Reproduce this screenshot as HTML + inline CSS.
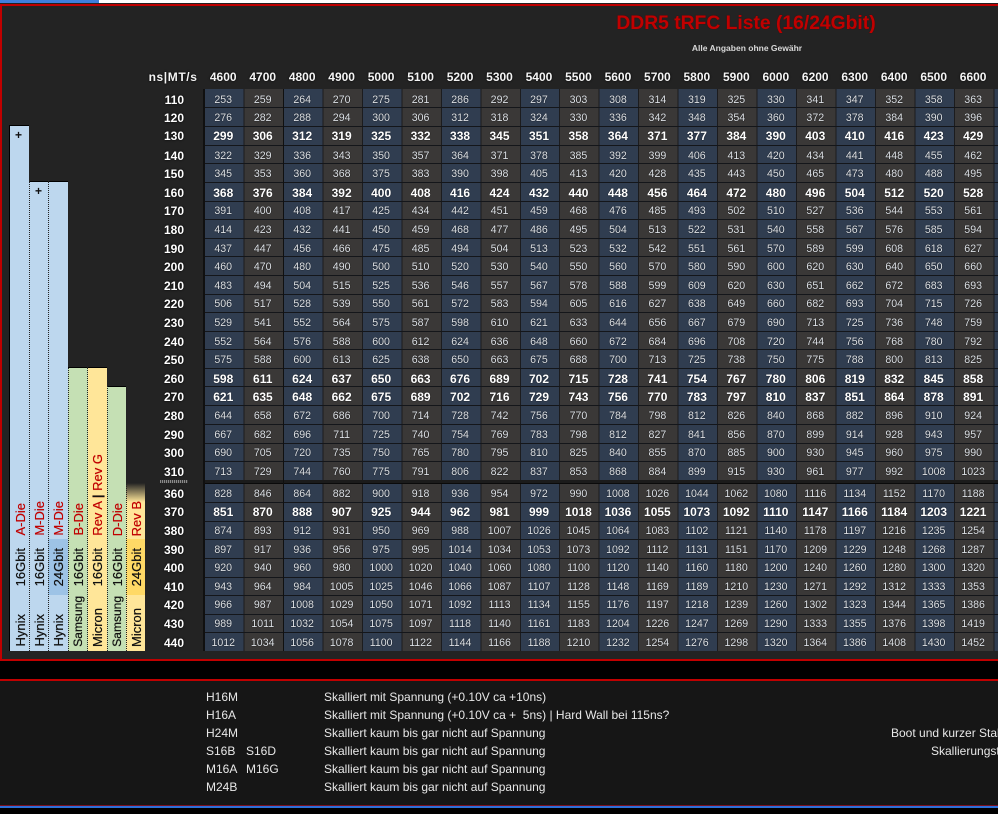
<!DOCTYPE html>
<html lang="de"><head><meta charset="utf-8"><title>DDR5 tRFC Liste</title>
<style>
html,body{margin:0;padding:0;background:#000}
#p{position:relative;width:998px;height:814px;overflow:hidden;background:#000;font-family:"Liberation Sans",sans-serif}
#p div{position:absolute}
.hd{top:70px;left:144px;height:15px;display:flex;color:#f4f4f4;font-weight:bold;font-size:12px;line-height:15px;text-shadow:0 0 2px #000}
.hd span{display:block;width:39.47px;text-align:center;flex:none}
.hd .f{width:59.5px;box-sizing:border-box;padding-right:6px;text-align:right;white-space:nowrap;letter-spacing:.6px}
.r{left:144px;width:854px;height:18.6px;margin-top:1px;display:flex;font-size:10.6px;line-height:18.6px;color:#dde1e6;text-shadow:0 0 1px #000}
.r b{display:block;width:59.5px;padding-right:19.5px;box-sizing:border-box;text-align:right;color:#fff;font-size:12px;text-shadow:0 0 2px #000;flex:none}
.r i{display:block;font-style:normal;width:39.47px;text-align:center;flex:none}
.s{color:#fff;font-weight:bold;font-size:12px}
.l{left:204px;width:794px;height:1px;background:#14161a}
.tx{writing-mode:vertical-rl;transform:rotate(180deg);white-space:nowrap;font-size:13px;line-height:19px;width:19px;text-align:left;color:#111;text-shadow:0 0 .5px #111}
.red{color:#c00000;text-shadow:0 0 .5px #c00000}
.note{font-size:12px;line-height:18px;color:#e8e8e8;white-space:nowrap;height:18px}
</style></head><body>
<div id="p">
<div style="left:0;top:0;width:998px;height:3px;background:#fff"></div>
<div style="left:0;top:0;width:99px;height:3px;background:#3f7fdc"></div>
<div style="left:0;top:3px;width:998px;height:1px;background:#222"></div>
<div style="left:0;top:4px;width:998px;height:657px;background:#c00000"></div>
<div style="left:2px;top:6px;width:996px;height:653px;background:#232323"></div>
<div style="left:0;top:679px;width:998px;height:2px;background:#c00000"></div>
<div style="left:0;top:681px;width:998px;height:124px;background:#161616"></div>
<div style="left:0;top:805px;width:998px;height:1px;background:#7a0f20"></div>
<div style="left:0;top:806px;width:998px;height:1.5px;background:#2f6fd8"></div>

<div style="left:556px;top:11px;width:380px;text-align:center;color:#c00000;font-weight:bold;font-size:19.3px;line-height:26px;text-shadow:0 0 1px #500;white-space:nowrap">DDR5 tRFC Liste (16/24Gbit)</div>
<div style="left:647px;top:43px;width:200px;text-align:center;color:#d8d8d8;font-weight:bold;font-size:8.5px;line-height:11px;white-space:nowrap">Alle Angaben ohne Gewähr</div>

<div class="hd"><span class="f">ns|MT/s</span><span>4600</span><span>4700</span><span>4800</span><span>4900</span><span>5000</span><span>5100</span><span>5200</span><span>5300</span><span>5400</span><span>5500</span><span>5600</span><span>5700</span><span>5800</span><span>5900</span><span>6000</span><span>6200</span><span>6300</span><span>6400</span><span>6500</span><span>6600</span></div>

<!-- table background -->
<div style="left:204px;top:89px;width:794px;height:391px;background:repeating-linear-gradient(90deg,#1c1c1e 0,#1c1c1e 1px,transparent 1px,transparent 39.47px),repeating-linear-gradient(90deg,#303d50 0,#303d50 39.47px,#3a3837 39.47px,#3a3837 78.94px)"></div>
<div style="left:204px;top:484px;width:794px;height:167px;background:repeating-linear-gradient(90deg,#1c1c1e 0,#1c1c1e 1px,transparent 1px,transparent 39.47px),repeating-linear-gradient(90deg,#303d50 0,#303d50 39.47px,#3a3837 39.47px,#3a3837 78.94px)"></div>
<div class="l" style="top:107px"></div><div class="l" style="top:126px"></div><div class="l" style="top:145px"></div><div class="l" style="top:163px"></div><div class="l" style="top:182px"></div><div class="l" style="top:201px"></div><div class="l" style="top:219px"></div><div class="l" style="top:238px"></div><div class="l" style="top:256px"></div><div class="l" style="top:275px"></div><div class="l" style="top:294px"></div><div class="l" style="top:312px"></div><div class="l" style="top:331px"></div><div class="l" style="top:349px"></div><div class="l" style="top:368px"></div><div class="l" style="top:386px"></div><div class="l" style="top:405px"></div><div class="l" style="top:424px"></div><div class="l" style="top:443px"></div><div class="l" style="top:461px"></div>
<div class="l" style="top:480px;height:4px;background:#1b1b1b"></div>
<div class="l" style="top:483px;background:#0a0a0a"></div>
<div class="l" style="top:502px"></div><div class="l" style="top:521px"></div><div class="l" style="top:539px"></div><div class="l" style="top:558px"></div><div class="l" style="top:577px"></div><div class="l" style="top:595px"></div><div class="l" style="top:614px"></div><div class="l" style="top:632px"></div>
<div style="left:203px;top:89px;width:2px;height:562px;background:#101010"></div>
<div style="left:283px;top:89px;width:1px;height:562px;background:#101010"></div>

<div class="r" style="top:89.7px"><b>110</b><i>253</i><i>259</i><i>264</i><i>270</i><i>275</i><i>281</i><i>286</i><i>292</i><i>297</i><i>303</i><i>308</i><i>314</i><i>319</i><i>325</i><i>330</i><i>341</i><i>347</i><i>352</i><i>358</i><i>363</i></div>
<div class="r" style="top:108.3px"><b>120</b><i>276</i><i>282</i><i>288</i><i>294</i><i>300</i><i>306</i><i>312</i><i>318</i><i>324</i><i>330</i><i>336</i><i>342</i><i>348</i><i>354</i><i>360</i><i>372</i><i>378</i><i>384</i><i>390</i><i>396</i></div>
<div class="r s" style="top:126.4px"><b>130</b><i>299</i><i>306</i><i>312</i><i>319</i><i>325</i><i>332</i><i>338</i><i>345</i><i>351</i><i>358</i><i>364</i><i>371</i><i>377</i><i>384</i><i>390</i><i>403</i><i>410</i><i>416</i><i>423</i><i>429</i></div>
<div class="r" style="top:145.5px"><b>140</b><i>322</i><i>329</i><i>336</i><i>343</i><i>350</i><i>357</i><i>364</i><i>371</i><i>378</i><i>385</i><i>392</i><i>399</i><i>406</i><i>413</i><i>420</i><i>434</i><i>441</i><i>448</i><i>455</i><i>462</i></div>
<div class="r" style="top:164.1px"><b>150</b><i>345</i><i>353</i><i>360</i><i>368</i><i>375</i><i>383</i><i>390</i><i>398</i><i>405</i><i>413</i><i>420</i><i>428</i><i>435</i><i>443</i><i>450</i><i>465</i><i>473</i><i>480</i><i>488</i><i>495</i></div>
<div class="r s" style="top:182.7px"><b>160</b><i>368</i><i>376</i><i>384</i><i>392</i><i>400</i><i>408</i><i>416</i><i>424</i><i>432</i><i>440</i><i>448</i><i>456</i><i>464</i><i>472</i><i>480</i><i>496</i><i>504</i><i>512</i><i>520</i><i>528</i></div>
<div class="r" style="top:201.3px"><b>170</b><i>391</i><i>400</i><i>408</i><i>417</i><i>425</i><i>434</i><i>442</i><i>451</i><i>459</i><i>468</i><i>476</i><i>485</i><i>493</i><i>502</i><i>510</i><i>527</i><i>536</i><i>544</i><i>553</i><i>561</i></div>
<div class="r" style="top:219.9px"><b>180</b><i>414</i><i>423</i><i>432</i><i>441</i><i>450</i><i>459</i><i>468</i><i>477</i><i>486</i><i>495</i><i>504</i><i>513</i><i>522</i><i>531</i><i>540</i><i>558</i><i>567</i><i>576</i><i>585</i><i>594</i></div>
<div class="r" style="top:238.5px"><b>190</b><i>437</i><i>447</i><i>456</i><i>466</i><i>475</i><i>485</i><i>494</i><i>504</i><i>513</i><i>523</i><i>532</i><i>542</i><i>551</i><i>561</i><i>570</i><i>589</i><i>599</i><i>608</i><i>618</i><i>627</i></div>
<div class="r" style="top:257.1px"><b>200</b><i>460</i><i>470</i><i>480</i><i>490</i><i>500</i><i>510</i><i>520</i><i>530</i><i>540</i><i>550</i><i>560</i><i>570</i><i>580</i><i>590</i><i>600</i><i>620</i><i>630</i><i>640</i><i>650</i><i>660</i></div>
<div class="r" style="top:275.7px"><b>210</b><i>483</i><i>494</i><i>504</i><i>515</i><i>525</i><i>536</i><i>546</i><i>557</i><i>567</i><i>578</i><i>588</i><i>599</i><i>609</i><i>620</i><i>630</i><i>651</i><i>662</i><i>672</i><i>683</i><i>693</i></div>
<div class="r" style="top:294.3px"><b>220</b><i>506</i><i>517</i><i>528</i><i>539</i><i>550</i><i>561</i><i>572</i><i>583</i><i>594</i><i>605</i><i>616</i><i>627</i><i>638</i><i>649</i><i>660</i><i>682</i><i>693</i><i>704</i><i>715</i><i>726</i></div>
<div class="r" style="top:312.9px"><b>230</b><i>529</i><i>541</i><i>552</i><i>564</i><i>575</i><i>587</i><i>598</i><i>610</i><i>621</i><i>633</i><i>644</i><i>656</i><i>667</i><i>679</i><i>690</i><i>713</i><i>725</i><i>736</i><i>748</i><i>759</i></div>
<div class="r" style="top:331.5px"><b>240</b><i>552</i><i>564</i><i>576</i><i>588</i><i>600</i><i>612</i><i>624</i><i>636</i><i>648</i><i>660</i><i>672</i><i>684</i><i>696</i><i>708</i><i>720</i><i>744</i><i>756</i><i>768</i><i>780</i><i>792</i></div>
<div class="r" style="top:350.1px"><b>250</b><i>575</i><i>588</i><i>600</i><i>613</i><i>625</i><i>638</i><i>650</i><i>663</i><i>675</i><i>688</i><i>700</i><i>713</i><i>725</i><i>738</i><i>750</i><i>775</i><i>788</i><i>800</i><i>813</i><i>825</i></div>
<div class="r s" style="top:368.7px"><b>260</b><i>598</i><i>611</i><i>624</i><i>637</i><i>650</i><i>663</i><i>676</i><i>689</i><i>702</i><i>715</i><i>728</i><i>741</i><i>754</i><i>767</i><i>780</i><i>806</i><i>819</i><i>832</i><i>845</i><i>858</i></div>
<div class="r s" style="top:387.3px"><b>270</b><i>621</i><i>635</i><i>648</i><i>662</i><i>675</i><i>689</i><i>702</i><i>716</i><i>729</i><i>743</i><i>756</i><i>770</i><i>783</i><i>797</i><i>810</i><i>837</i><i>851</i><i>864</i><i>878</i><i>891</i></div>
<div class="r" style="top:405.9px"><b>280</b><i>644</i><i>658</i><i>672</i><i>686</i><i>700</i><i>714</i><i>728</i><i>742</i><i>756</i><i>770</i><i>784</i><i>798</i><i>812</i><i>826</i><i>840</i><i>868</i><i>882</i><i>896</i><i>910</i><i>924</i></div>
<div class="r" style="top:424.5px"><b>290</b><i>667</i><i>682</i><i>696</i><i>711</i><i>725</i><i>740</i><i>754</i><i>769</i><i>783</i><i>798</i><i>812</i><i>827</i><i>841</i><i>856</i><i>870</i><i>899</i><i>914</i><i>928</i><i>943</i><i>957</i></div>
<div class="r" style="top:443.1px"><b>300</b><i>690</i><i>705</i><i>720</i><i>735</i><i>750</i><i>765</i><i>780</i><i>795</i><i>810</i><i>825</i><i>840</i><i>855</i><i>870</i><i>885</i><i>900</i><i>930</i><i>945</i><i>960</i><i>975</i><i>990</i></div>
<div class="r" style="top:461.7px"><b>310</b><i>713</i><i>729</i><i>744</i><i>760</i><i>775</i><i>791</i><i>806</i><i>822</i><i>837</i><i>853</i><i>868</i><i>884</i><i>899</i><i>915</i><i>930</i><i>961</i><i>977</i><i>992</i><i>1008</i><i>1023</i></div>
<div style="left:160px;top:480px;width:28px;height:3px;background:repeating-linear-gradient(90deg,#8a8a8a 0,#8a8a8a 1px,#3a3a3a 1px,#3a3a3a 2px)"></div>
<div class="r" style="top:483.7px"><b>360</b><i>828</i><i>846</i><i>864</i><i>882</i><i>900</i><i>918</i><i>936</i><i>954</i><i>972</i><i>990</i><i>1008</i><i>1026</i><i>1044</i><i>1062</i><i>1080</i><i>1116</i><i>1134</i><i>1152</i><i>1170</i><i>1188</i></div>
<div class="r s" style="top:502.3px"><b>370</b><i>851</i><i>870</i><i>888</i><i>907</i><i>925</i><i>944</i><i>962</i><i>981</i><i>999</i><i>1018</i><i>1036</i><i>1055</i><i>1073</i><i>1092</i><i>1110</i><i>1147</i><i>1166</i><i>1184</i><i>1203</i><i>1221</i></div>
<div class="r" style="top:520.9px"><b>380</b><i>874</i><i>893</i><i>912</i><i>931</i><i>950</i><i>969</i><i>988</i><i>1007</i><i>1026</i><i>1045</i><i>1064</i><i>1083</i><i>1102</i><i>1121</i><i>1140</i><i>1178</i><i>1197</i><i>1216</i><i>1235</i><i>1254</i></div>
<div class="r" style="top:539.5px"><b>390</b><i>897</i><i>917</i><i>936</i><i>956</i><i>975</i><i>995</i><i>1014</i><i>1034</i><i>1053</i><i>1073</i><i>1092</i><i>1112</i><i>1131</i><i>1151</i><i>1170</i><i>1209</i><i>1229</i><i>1248</i><i>1268</i><i>1287</i></div>
<div class="r" style="top:558.1px"><b>400</b><i>920</i><i>940</i><i>960</i><i>980</i><i>1000</i><i>1020</i><i>1040</i><i>1060</i><i>1080</i><i>1100</i><i>1120</i><i>1140</i><i>1160</i><i>1180</i><i>1200</i><i>1240</i><i>1260</i><i>1280</i><i>1300</i><i>1320</i></div>
<div class="r" style="top:576.7px"><b>410</b><i>943</i><i>964</i><i>984</i><i>1005</i><i>1025</i><i>1046</i><i>1066</i><i>1087</i><i>1107</i><i>1128</i><i>1148</i><i>1169</i><i>1189</i><i>1210</i><i>1230</i><i>1271</i><i>1292</i><i>1312</i><i>1333</i><i>1353</i></div>
<div class="r" style="top:595.3px"><b>420</b><i>966</i><i>987</i><i>1008</i><i>1029</i><i>1050</i><i>1071</i><i>1092</i><i>1113</i><i>1134</i><i>1155</i><i>1176</i><i>1197</i><i>1218</i><i>1239</i><i>1260</i><i>1302</i><i>1323</i><i>1344</i><i>1365</i><i>1386</i></div>
<div class="r" style="top:613.9px"><b>430</b><i>989</i><i>1011</i><i>1032</i><i>1054</i><i>1075</i><i>1097</i><i>1118</i><i>1140</i><i>1161</i><i>1183</i><i>1204</i><i>1226</i><i>1247</i><i>1269</i><i>1290</i><i>1333</i><i>1355</i><i>1376</i><i>1398</i><i>1419</i></div>
<div class="r" style="top:632.5px"><b>440</b><i>1012</i><i>1034</i><i>1056</i><i>1078</i><i>1100</i><i>1122</i><i>1144</i><i>1166</i><i>1188</i><i>1210</i><i>1232</i><i>1254</i><i>1276</i><i>1298</i><i>1320</i><i>1364</i><i>1386</i><i>1408</i><i>1430</i><i>1452</i></div>

<!-- bars -->
<div style="left:9px;top:125px;width:20px;height:526px;background:#bdd7ee;box-sizing:border-box;border:1px solid #000;border-bottom:0;border-right:0"></div>
<div style="left:29px;top:181px;width:39px;height:470px;background:#bdd7ee;box-sizing:border-box;border-top:1px solid #000"></div>
<div style="left:48px;top:539px;width:20px;height:56px;background:#9dc3e6"></div>
<div style="left:68px;top:367px;width:20px;height:284px;background:#c5e0b4;box-sizing:border-box;border-top:1px solid #000"></div>
<div style="left:88px;top:367px;width:19px;height:284px;background:#ffe699;box-sizing:border-box;border-top:1px solid #000"></div>
<div style="left:107px;top:386px;width:19px;height:265px;background:#c5e0b4;box-sizing:border-box;border-top:1px solid #000"></div>
<div style="left:126px;top:483px;width:19px;height:168px;background:linear-gradient(180deg,#232323 0,#ffe699 19px)"></div>
<div style="left:126px;top:539px;width:19px;height:56px;background:#ffd966"></div>
<div style="left:29px;top:181px;height:470px;width:0;border-left:1px dotted #222"></div>
<div style="left:48px;top:181px;height:470px;width:0;border-left:1px dotted #222"></div>
<div style="left:68px;top:181px;height:470px;width:0;border-left:1px dotted #222"></div>
<div style="left:87px;top:367px;height:284px;width:0;border-left:1px dotted #222"></div>
<div style="left:107px;top:367px;height:284px;width:0;border-left:1px dotted #222"></div>
<div style="left:126px;top:386px;height:265px;width:0;border-left:1px dotted #222"></div>
<div style="left:9px;top:128px;width:19px;text-align:center;font-size:12px;line-height:14px;font-weight:bold;color:#111">+</div>
<div style="left:29px;top:184px;width:19px;text-align:center;font-size:12px;line-height:14px;font-weight:bold;color:#111">+</div>

<div class="tx" style="left:11px;bottom:167px">Hynix</div>
<div class="tx" style="left:11px;bottom:228px">16Gbit</div>
<div class="tx red" style="left:11px;bottom:278px">A-Die</div>
<div class="tx" style="left:30px;bottom:167px">Hynix</div>
<div class="tx" style="left:30px;bottom:228px">16Gbit</div>
<div class="tx red" style="left:30px;bottom:278px">M-Die</div>
<div class="tx" style="left:49px;bottom:167px">Hynix</div>
<div class="tx" style="left:49px;bottom:228px">24Gbit</div>
<div class="tx red" style="left:49px;bottom:278px">M-Die</div>
<div class="tx" style="left:69px;bottom:167px;font-size:12px">Samsung</div>
<div class="tx" style="left:69px;bottom:228px">16Gbit</div>
<div class="tx red" style="left:69px;bottom:278px">B-Die</div>
<div class="tx" style="left:88px;bottom:167px">Micron</div>
<div class="tx" style="left:88px;bottom:228px">16Gbit</div>
<div class="tx red" style="left:88px;bottom:278px">Rev A <span style="color:#111;font-weight:bold">|</span> Rev G</div>
<div class="tx" style="left:108px;bottom:167px;font-size:12px">Samsung</div>
<div class="tx" style="left:108px;bottom:228px">16Gbit</div>
<div class="tx red" style="left:108px;bottom:278px">D-Die</div>
<div class="tx" style="left:127px;bottom:167px">Micron</div>
<div class="tx" style="left:127px;bottom:228px">24Gbit</div>
<div class="tx red" style="left:127px;bottom:278px">Rev B</div>

<!-- notes -->
<div class="note" style="left:206px;top:688px">H16M</div>
<div class="note" style="left:206px;top:706px">H16A</div>
<div class="note" style="left:206px;top:724px">H24M</div>
<div class="note" style="left:206px;top:742px">S16B</div><div class="note" style="left:246px;top:742px">S16D</div>
<div class="note" style="left:206px;top:760px">M16A</div><div class="note" style="left:246px;top:760px">M16G</div>
<div class="note" style="left:206px;top:778px">M24B</div>
<div class="note" style="left:324px;top:688px">Skalliert mit Spannung (+0.10V ca +10ns)</div>
<div class="note" style="left:324px;top:706px">Skalliert mit Spannung (+0.10V ca + &nbsp;5ns) | Hard Wall bei 115ns?</div>
<div class="note" style="left:324px;top:724px">Skalliert kaum bis gar nicht auf Spannung</div>
<div class="note" style="left:324px;top:742px">Skalliert kaum bis gar nicht auf Spannung</div>
<div class="note" style="left:324px;top:760px">Skalliert kaum bis gar nicht auf Spannung</div>
<div class="note" style="left:324px;top:778px">Skalliert kaum bis gar nicht auf Spannung</div>
<div class="note" style="left:891px;top:724px">Boot und kurzer Stabilitätstest</div>
<div class="note" style="left:931px;top:742px">Skallierungstest</div>
</div>
</body></html>
